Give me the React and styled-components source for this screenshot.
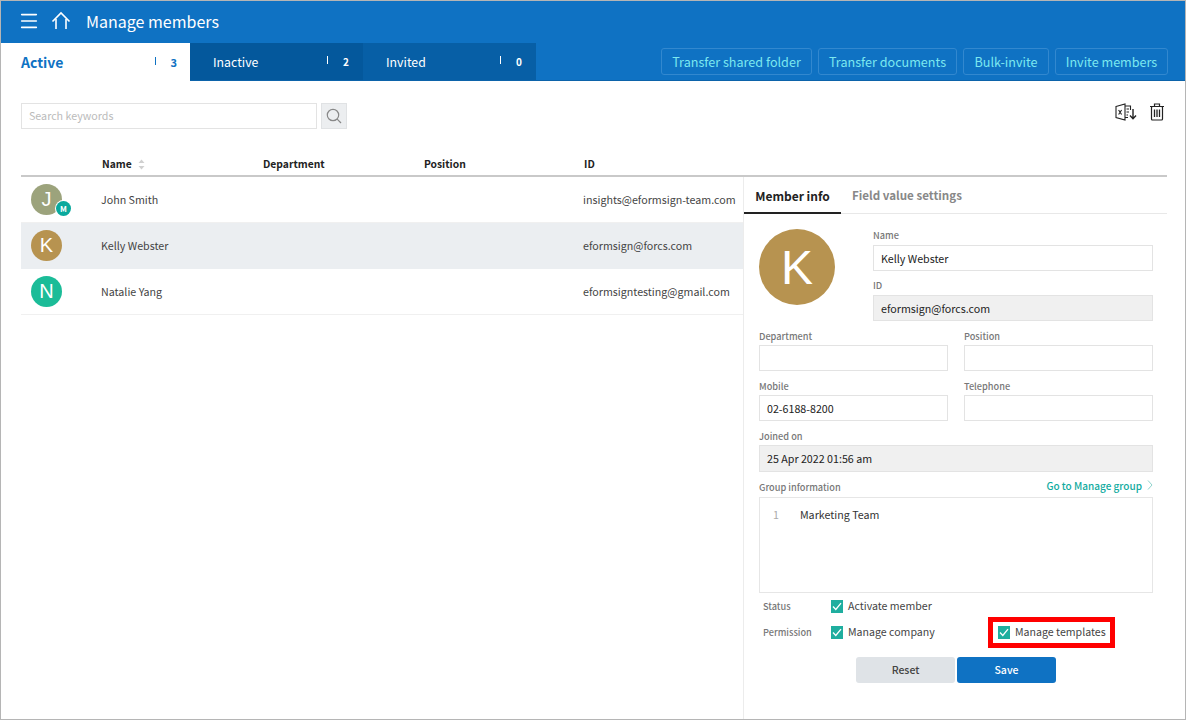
import styled, { createGlobalStyle } from "styled-components"
import { Menu } from "lucide-react"

const GlobalStyle = createGlobalStyle`
  html, body {
    margin: 0;
    padding: 0;
    background: #fff;
  }
  * {
    box-sizing: border-box;
  }
  body {
    font-family: "Noto Sans CJK KR", "Noto Sans", sans-serif;
    color: #333;
  }
`

const Page = styled.div`
  width: 1186px;
  height: 720px;
  display: flex;
  flex-direction: column;
  border: 1px solid #b5b5b5;
  overflow: hidden;
`

const Header = styled.header`
  height: 42px;
  flex: none;
  background: #0f72c3;
  color: #fff;
  display: flex;
  align-items: center;
  padding: 0 0 2px 17px;
`

const HeaderTitle = styled.h1`
  margin: 0 0 0 15px;
  font-size: 16px;
  font-weight: 400;
  line-height: 40px;
`

const HomeIcon = styled.svg`
  width: 20px;
  height: 20px;
  margin-left: 11px;
  fill: none;
  stroke: #fff;
  stroke-width: 1.6;
`

const TabBar = styled.div`
  height: 38px;
  flex: none;
  background: #0f72c3;
  display: flex;
  align-items: stretch;
  border-bottom: 1px solid #0c63aa;
`

const Tab = styled.div`
  width: ${(p) => (p.$active ? 189 : 173)}px;
  margin-bottom: ${(p) => (p.$active ? -1 : 0)}px;
  display: flex;
  align-items: center;
  padding-left: ${(p) => (p.$active ? 20 : 23)}px;
  background: ${(p) => (p.$active ? "#fff" : p.$bg)};
  color: ${(p) => (p.$active ? "#0f72c3" : "#fff")};
  font-size: ${(p) => (p.$active ? 14 : 12.3)}px;
  font-weight: ${(p) => (p.$active ? 700 : 400)};
`

const TabLabel = styled.span`
  flex: 1;
`

const TabCount = styled.span`
  width: ${(p) => (p.$active ? 35 : 36)}px;
  display: flex;
  justify-content: space-between;
  align-items: center;
  padding-right: ${(p) => (p.$active ? 13 : 14)}px;
  font-size: ${(p) => (p.$active ? 11 : 10)}px;
  font-weight: 700;
  &::before {
    content: "";
    width: 1px;
    height: 8px;
    margin-bottom: 3px;
    background: currentColor;
  }
`

const TabActions = styled.div`
  margin-left: auto;
  padding: 5px 17px 0 0;
  display: flex;
  gap: 6px;
`

const OutlineButton = styled.button`
  height: 27px;
  width: ${(p) => p.$w}px;
  padding: 0;
  background: transparent;
  border: 1px solid #3288cf;
  border-radius: 3px;
  color: #7ce8f0;
  font-family: inherit;
  font-size: 12.6px;
`

const Toolbar = styled.div`
  height: 69px;
  flex: none;
  display: flex;
  align-items: flex-start;
  padding: 22px 20px 0 20px;
`

const SearchInput = styled.div`
  width: 296px;
  height: 26px;
  border: 1px solid #e3e3e3;
  padding-left: 7px;
  font-size: 10.7px;
  line-height: 24px;
  color: #bbb;
`

const SearchButton = styled.div`
  width: 26px;
  height: 26px;
  margin-left: 4px;
  background: #eceef0;
  border: 1px solid #e0e2e4;
  display: flex;
  align-items: center;
  justify-content: center;
`

const ToolIcons = styled.div`
  margin-left: auto;
  display: flex;
  gap: 12px;
  align-items: flex-start;
`

const Main = styled.div`
  flex: 1;
  min-height: 0;
  display: flex;
  flex-direction: column;
  padding: 0 18px 0 20px;
`

const TableHead = styled.div`
  height: 27px;
  flex: none;
  display: grid;
  grid-template-columns: 81px 161px 161px 160px 1fr;
  align-items: center;
  padding-top: 2px;
  border-bottom: 2px solid #c9c9c9;
  font-size: 10.3px;
  font-weight: 700;
  color: #222;
`

const SortIcon = styled.svg`
  width: 7px;
  height: 11px;
  margin-left: 6px;
  vertical-align: -2px;
  fill: #d0d0d0;
`

const Split = styled.div`
  flex: 1;
  min-height: 0;
  display: flex;
`

const MemberList = styled.div`
  width: 722px;
  flex: none;
`

const MemberRow = styled.div`
  height: 46px;
  display: grid;
  grid-template-columns: 80px 482px 1fr;
  align-items: center;
  background: ${(p) => (p.$selected ? "#ebeef1" : "#fff")};
  border-bottom: 1px solid ${(p) => (p.$selected ? "#ebeef1" : "#f0f0f0")};
  font-size: 10.7px;
  color: #444;
  white-space: nowrap;
`

const AvatarCell = styled.div`
  position: relative;
  width: 31px;
  height: 31px;
  margin-left: 10px;
`

const Avatar = styled.div`
  width: ${(p) => p.$size}px;
  height: ${(p) => p.$size}px;
  flex: none;
  border-radius: 50%;
  background: ${(p) => p.$bg};
  color: #fff;
  display: flex;
  align-items: center;
  justify-content: center;
  font-size: ${(p) => p.$font}px;
  font-family: "Liberation Sans", sans-serif;
`

const ManagerBadge = styled.span`
  position: absolute;
  right: -9px;
  bottom: -1px;
  width: 15px;
  height: 15px;
  border-radius: 50%;
  background: #0aa99d;
  box-shadow: 0 0 0 1px #fff;
  color: #fff;
  font-size: 8px;
  font-weight: 700;
  display: flex;
  align-items: center;
  justify-content: center;
`

const DetailPanel = styled.section`
  width: 424px;
  flex: none;
  border-left: 1px solid #ececec;
  display: flex;
  flex-direction: column;
`

const DetailTabs = styled.div`
  height: 37px;
  flex: none;
  display: flex;
  border-bottom: 1px solid #e8e8e8;
`

const DetailTab = styled.div`
  width: ${(p) => p.$w}px;
  text-align: ${(p) => (p.$active ? "center" : "left")};
  padding-left: ${(p) => (p.$active ? 0 : 11)}px;
  height: 37px;
  line-height: 37px;
  font-size: ${(p) => (p.$active ? 12 : 11.6)}px;
  font-weight: 700;
  color: ${(p) => (p.$active ? "#222" : "#888")};
  border-bottom: ${(p) => (p.$active ? "2px solid #222" : "none")};
`

const DetailForm = styled.div`
  padding: 15px 14px 0 15px;
`

const ProfileRow = styled.div`
  display: flex;
  gap: 38px;
`

const TwoCols = styled.div`
  display: grid;
  grid-template-columns: 189px 189px;
  gap: 16px;
`

const Field = styled.div`
  margin-top: ${(p) => p.$mt ?? 0}px;
`

const FieldLabel = styled.div`
  height: 16px;
  font-size: 9.2px;
  line-height: 14px;
  font-weight: 500;
  color: #777;
`

const ProfileFields = styled.div`
  flex: 1;
  ${FieldLabel} {
    line-height: 13px;
  }
`

const TextBox = styled.div`
  height: ${(p) => p.$h || 26}px;
  border: 1px solid #e3e3e3;
  padding-left: 7px;
  font-size: 10.7px;
  line-height: 25px;
  color: #222;
  background: ${(p) => (p.$disabled ? "#f0f0f0" : "#fff")};
`

const GroupHead = styled.div`
  display: flex;
  justify-content: space-between;
  height: 17px;
  margin-top: 8px;
`

const GroupLink = styled.span`
  display: flex;
  align-items: flex-start;
  gap: 5px;
  font-size: 10px;
  font-weight: 500;
  line-height: 12px;
  color: #12ab9f;
`

const GroupBox = styled.div`
  height: 96px;
  border: 1px solid #e6e6e6;
  padding: 9px 13px;
  display: flex;
  gap: 21px;
  font-size: 10.7px;
  line-height: 16px;
  color: #333;
`

const LineNumber = styled.span`
  color: #aaa;
`

const OptionRow = styled.div`
  display: grid;
  grid-template-columns: 68px 157px auto;
  align-items: center;
  height: 26px;
  padding: 0 0 2px 4px;
`

const OptionLabel = styled.span`
  padding-top: 2px;
  font-size: 9.2px;
  font-weight: 500;
  color: #777;
`

const CheckItem = styled.label`
  display: flex;
  align-items: center;
  gap: 5px;
  font-size: 10.6px;
  color: #444;
`

const Checkbox = styled.span`
  width: 12px;
  height: 13px;
  margin-top: 2px;
  background: #1fae9f;
  display: flex;
  align-items: center;
  justify-content: center;
`

const Highlight = styled.div`
  width: 127px;
  height: 31px;
  margin: -2px 0 -5px;
  border: 5px solid #ff0000;
  padding: 0 0 3px 5px;
  display: flex;
  align-items: center;
`

const FormButtons = styled.div`
  display: flex;
  justify-content: center;
  gap: 2px;
  margin-top: 12px;
`

const FormButton = styled.button`
  width: 99px;
  height: 26px;
  padding: 0 0 2px;
  border: none;
  border-radius: 3px;
  background: ${(p) => (p.$primary ? "#0f72c3" : "#dfe3e7")};
  color: ${(p) => (p.$primary ? "#fff" : "#444")};
  font-family: inherit;
  font-size: 10.5px;
  font-weight: 500;
`

const members = [
  { letter: "J", bg: "#9ca37c", name: "John Smith", id: "insights@eformsign-team.com", manager: true },
  { letter: "K", bg: "#b79350", name: "Kelly Webster", id: "eformsign@forcs.com", selected: true },
  { letter: "N", bg: "#1bbc98", name: "Natalie Yang", id: "eformsigntesting@gmail.com" },
]

const Tick = () => (
  <svg width="10" height="9" viewBox="0 0 10 9" fill="none" stroke="#fff" strokeWidth="1.3">
    <path d="M1 4.5 L3.8 7.5 L9 1.2" />
  </svg>
)

function App() {
  return (
    <Page>
      <GlobalStyle />
      <Header>
        <Menu size={22} strokeWidth={1.6} absoluteStrokeWidth />
        <HomeIcon viewBox="0 0 20 20">
          <path d="M1.5 10.5 L10 2 L18.5 10.5" />
          <path d="M5 8 V18 M15 8 V18" />
        </HomeIcon>
        <HeaderTitle>Manage members</HeaderTitle>
      </Header>

      <TabBar>
        <Tab $active>
          <TabLabel>Active</TabLabel>
          <TabCount $active>3</TabCount>
        </Tab>
        <Tab $bg="#04589c">
          <TabLabel>Inactive</TabLabel>
          <TabCount>2</TabCount>
        </Tab>
        <Tab $bg="#075fa6">
          <TabLabel>Invited</TabLabel>
          <TabCount>0</TabCount>
        </Tab>
        <TabActions>
          <OutlineButton $w={151}>Transfer shared folder</OutlineButton>
          <OutlineButton $w={139}>Transfer documents</OutlineButton>
          <OutlineButton $w={86}>Bulk-invite</OutlineButton>
          <OutlineButton $w={113}>Invite members</OutlineButton>
        </TabActions>
      </TabBar>

      <Toolbar>
        <SearchInput>Search keywords</SearchInput>
        <SearchButton>
          <svg width="18" height="18" viewBox="0 0 18 18" fill="none" stroke="#888" strokeWidth="1.2">
            <circle cx="8" cy="8" r="5.7" />
            <path d="M12.2 12.2 L16 16" />
          </svg>
        </SearchButton>
        <ToolIcons>
          <svg width="22" height="18" viewBox="0 0 22 18" fill="none" stroke="#222" strokeWidth="1.1">
            <path d="M1 3.5 L10 1 V17 L1 14.5 Z" />
            <path d="M10 3 H15.5 V7 M10 14.5 H13" />
            <path d="M11.5 6 H14 M11.5 9 H14 M11.5 12 H13" />
            <path d="M3.6 7 L6.6 11.5 M6.6 7 L3.6 11.5" />
            <path d="M18 6 V15.5 M15 12.5 L18 15.7 L21 12.5" strokeWidth="1.4" />
          </svg>
          <svg width="16" height="18" viewBox="0 0 16 18" fill="none" stroke="#222" strokeWidth="1.2">
            <path d="M1 3.5 H15 M5.5 3.5 V1 H10.5 V3.5" />
            <rect x="2.5" y="3.5" width="11" height="13.5" rx="1" />
            <path d="M5.5 6.5 V14 M8 6.5 V14 M10.5 6.5 V14" strokeWidth="1.3" />
          </svg>
        </ToolIcons>
      </Toolbar>

      <Main>
        <TableHead>
          <span />
          <span>
            Name
            <SortIcon viewBox="0 0 7 11">
              <path d="M3.5 0.5 L6.5 4 H0.5 Z M3.5 10.5 L0.5 7 H6.5 Z" />
            </SortIcon>
          </span>
          <span>Department</span>
          <span>Position</span>
          <span>ID</span>
        </TableHead>

        <Split>
          <MemberList>
            {members.map((m) => (
              <MemberRow key={m.id} $selected={m.selected}>
                <AvatarCell>
                  <Avatar $size={31} $bg={m.bg} $font={20}>{m.letter}</Avatar>
                  {m.manager && <ManagerBadge>M</ManagerBadge>}
                </AvatarCell>
                <span>{m.name}</span>
                <span>{m.id}</span>
              </MemberRow>
            ))}
          </MemberList>

          <DetailPanel>
            <DetailTabs>
              <DetailTab $active $w={97}>Member info</DetailTab>
              <DetailTab $w={160}>Field value settings</DetailTab>
            </DetailTabs>
            <DetailForm>
              <ProfileRow>
                <Avatar $size={76} $bg="#b79350" $font={48}>K</Avatar>
                <ProfileFields>
                  <Field>
                    <FieldLabel>Name</FieldLabel>
                    <TextBox>Kelly Webster</TextBox>
                  </Field>
                  <Field $mt={8}>
                    <FieldLabel>ID</FieldLabel>
                    <TextBox $disabled>eformsign@forcs.com</TextBox>
                  </Field>
                </ProfileFields>
              </ProfileRow>
              <Field $mt={8}>
                <TwoCols>
                  <div>
                    <FieldLabel>Department</FieldLabel>
                    <TextBox />
                  </div>
                  <div>
                    <FieldLabel>Position</FieldLabel>
                    <TextBox />
                  </div>
                </TwoCols>
              </Field>
              <Field $mt={8}>
                <TwoCols>
                  <div>
                    <FieldLabel>Mobile</FieldLabel>
                    <TextBox>02-6188-8200</TextBox>
                  </div>
                  <div>
                    <FieldLabel>Telephone</FieldLabel>
                    <TextBox />
                  </div>
                </TwoCols>
              </Field>
              <Field $mt={8}>
                <FieldLabel>Joined on</FieldLabel>
                <TextBox $disabled $h={27}>25 Apr 2022 01:56 am</TextBox>
              </Field>
              <GroupHead>
                <FieldLabel>Group information</FieldLabel>
                <GroupLink>
                  Go to Manage group
                  <svg width="6" height="10" viewBox="0 0 6 10" fill="none" stroke="#8fd3cd" strokeWidth="1">
                    <path d="M1 0.5 L5 5 L1 9.5" />
                  </svg>
                </GroupLink>
              </GroupHead>
              <GroupBox>
                <LineNumber>1</LineNumber>
                <span>Marketing Team</span>
              </GroupBox>
              <OptionRow>
                <OptionLabel>Status</OptionLabel>
                <CheckItem>
                  <Checkbox><Tick /></Checkbox>
                  Activate member
                </CheckItem>
              </OptionRow>
              <OptionRow>
                <OptionLabel>Permission</OptionLabel>
                <CheckItem>
                  <Checkbox><Tick /></Checkbox>
                  Manage company
                </CheckItem>
                <Highlight>
                  <CheckItem>
                    <Checkbox><Tick /></Checkbox>
                    Manage templates
                  </CheckItem>
                </Highlight>
              </OptionRow>
              <FormButtons>
                <FormButton>Reset</FormButton>
                <FormButton $primary>Save</FormButton>
              </FormButtons>
            </DetailForm>
          </DetailPanel>
        </Split>
      </Main>
    </Page>
  )
}

export default App
